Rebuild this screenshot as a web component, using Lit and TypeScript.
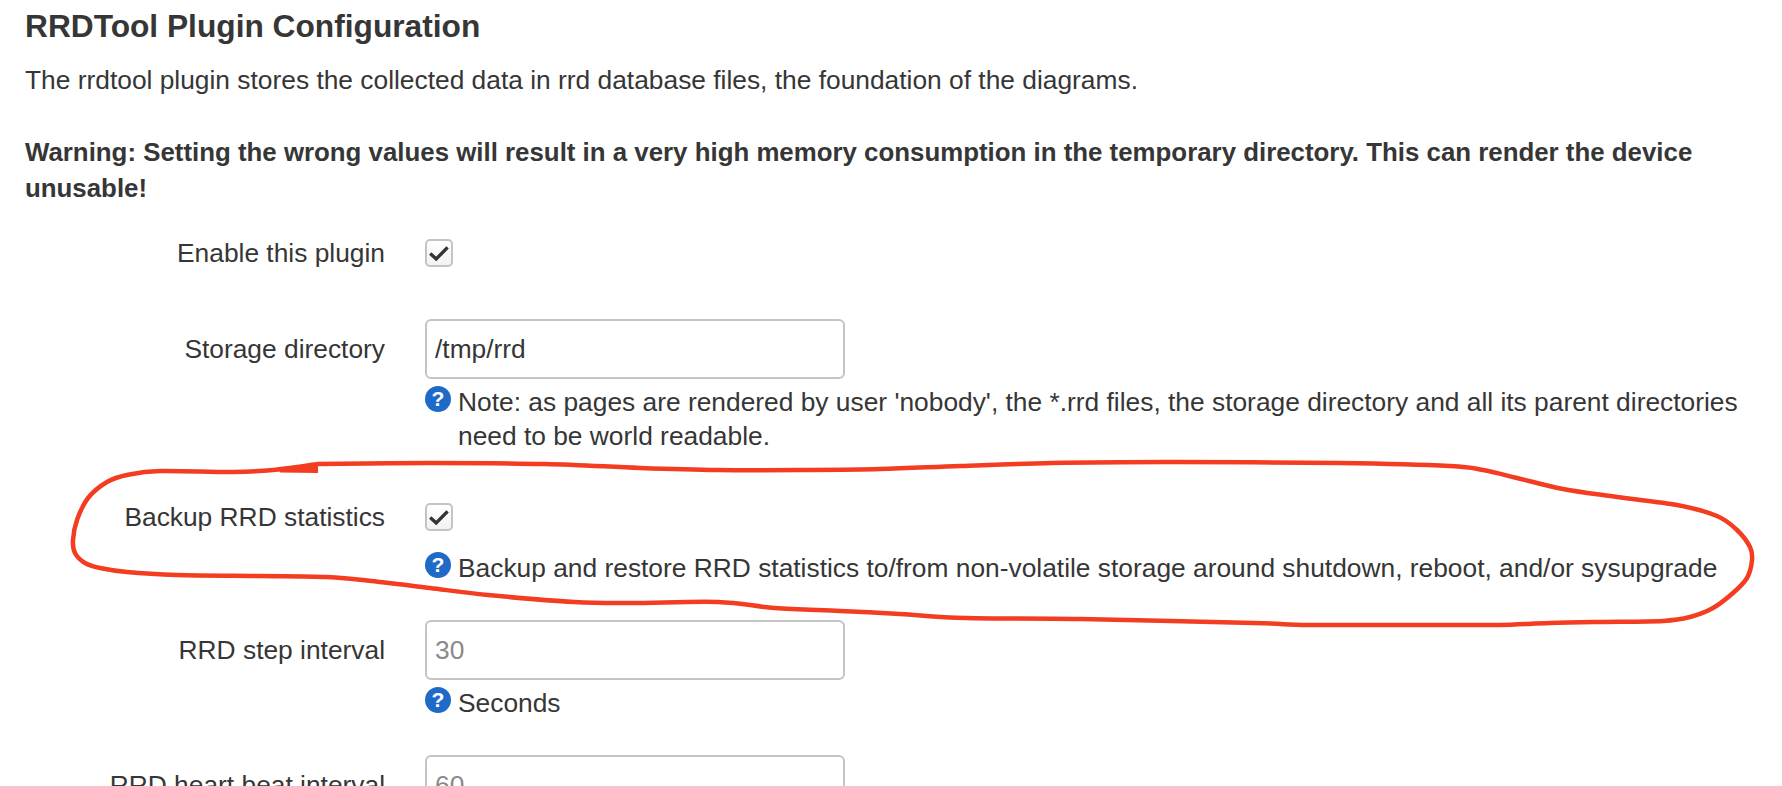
import { LitElement, html, css, svg } from "lit";
import { customElement } from "lit/decorators.js";

const STROKE: [number, number][] = [
  [318,464],[430,463],[545,464],[640,468],[718,470],[800,470],[880,469],[960,466],[1052,463],[1168,462],[1340,463],[1450,466],
  [1483,470],[1517,478],[1563,489],[1617,497],[1677,505],[1717,516],[1737,530],[1750,547],[1752,560],[1747,578],[1733,593],[1713,608],[1690,617],
  [1663,621],[1600,622],[1550,623],[1500,625],[1450,625],[1311,625],[1254,623],[1081,619],[966,618],[900,614],[840,611],
  [775,608],[718,602],[631,603],[574,602],[488,595],[430,588],[380,582],[327,577],[260,576],[177,575],[127,572],[100,568],
  [85,563],[75,553],[73,540],[77,520],[88,498],[107,482],[127,475],[160,471],[233,472],[273,470],[318,464],
];

function smooth(p: [number, number][]): string {
  let d = `M${p[0][0]} ${p[0][1]}`;
  for (let i = 0; i < p.length - 1; i++) {
    const a = p[Math.max(i - 1, 0)], b = p[i], c = p[i + 1], e = p[Math.min(i + 2, p.length - 1)];
    const c1x = b[0] + (c[0] - a[0]) / 6, c1y = b[1] + (c[1] - a[1]) / 6;
    const c2x = c[0] - (e[0] - b[0]) / 6, c2y = c[1] - (e[1] - b[1]) / 6;
    d += `C${c1x.toFixed(1)} ${c1y.toFixed(1)} ${c2x.toFixed(1)} ${c2y.toFixed(1)} ${c[0]} ${c[1]}`;
  }
  return d;
}

@customElement("app-root")
export class AppRoot extends LitElement {
  static styles = css`
    :host {
      display: block;
      position: relative;
      height: 786px;
      overflow: hidden;
      background: #fff;
      color: #363636;
      font-family: "Liberation Sans", Arial, sans-serif;
      font-size: 26.35px;
      line-height: 36px;
    }
    .page { padding: 0 25px; }
    h2 { margin: 0; padding-top: 6px; font-size: 31.7px; line-height: 40px; font-weight: 700; }
    .desc { margin: 16px 0 0; }
    .warn { margin: 36px 0 0; font-size: 25.85px; font-weight: 700; }
    .row { display: grid; grid-template-columns: 360px 1fr; column-gap: 40px; }
    .label { text-align: right; }
    .ctrl { min-width: 0; }
    .row-enable { margin-top: 29px; align-items: start; }
    .row-dir { margin-top: 48px; }
    .row-dir .label, .row-step .label, .row-hb .label { line-height: 60px; }
    .row-backup { margin-top: 46px; }
    .row-backup .help { margin-top: 20px; }
    .row-step { margin-top: 35px; }
    .row-hb { margin-top: 35px; }
    .check {
      display: block;
      width: 28px; height: 28px;
      margin: 4px 0;
      box-sizing: border-box;
      border: 2px solid #c4c4c4;
      border-radius: 5px;
      background: linear-gradient(#ffffff, #f2f2f2);
    }
    .check svg { display: block; width: 24px; height: 24px; }
    input {
      display: block;
      box-sizing: border-box;
      width: 420px; height: 60px;
      padding: 0 8px;
      border: 2px solid #c4c4c4;
      border-radius: 6px;
      font: inherit;
      color: #363636;
      background: #fff;
      outline: none;
    }
    input::placeholder { color: #8a8a8a; opacity: 1; }
    .help { position: relative; padding-left: 33px; margin-top: 6px; line-height: 34px; }
    .q {
      position: absolute; left: 0; top: 1px;
      width: 26px; height: 26px;
      border-radius: 50%;
      background: #1f6ac9;
      color: #fff;
      font-size: 21px;
      font-weight: 700;
      line-height: 26px;
      text-align: center;
    }
    .mark { position: absolute; left: 0; top: 0; pointer-events: none; }
  `;

  private check() {
    return html`<span class="check"><svg viewBox="0 0 24 24"><path d="M3.2 12.4 L9.2 18 L20.6 6.4" fill="none" stroke="#333" stroke-width="3.4"/></svg></span>`;
  }

  private help(text: string) {
    return html`<div class="help"><span class="q">?</span>${text}</div>`;
  }

  render() {
    return html`
      <div class="page">
        <h2>RRDTool Plugin Configuration</h2>
        <p class="desc">The rrdtool plugin stores the collected data in rrd database files, the foundation of the diagrams.</p>
        <p class="warn">Warning: Setting the wrong values will result in a very high memory consumption in the temporary directory. This can render the device unusable!</p>

        <div class="row row-enable">
          <div class="label">Enable this plugin</div>
          <div class="ctrl">${this.check()}</div>
        </div>
        <div class="row row-dir">
          <div class="label">Storage directory</div>
          <div class="ctrl">
            <input type="text" .value=${"/tmp/rrd"} />
            ${this.help("Note: as pages are rendered by user 'nobody', the *.rrd files, the storage directory and all its parent directories need to be world readable.")}
          </div>
        </div>
        <div class="row row-backup">
          <div class="label">Backup RRD statistics</div>
          <div class="ctrl">
            ${this.check()}
            ${this.help("Backup and restore RRD statistics to/from non-volatile storage around shutdown, reboot, and/or sysupgrade")}
          </div>
        </div>
        <div class="row row-step">
          <div class="label">RRD step interval</div>
          <div class="ctrl">
            <input type="text" placeholder="30" />
            ${this.help("Seconds")}
          </div>
        </div>
        <div class="row row-hb">
          <div class="label">RRD heart beat interval</div>
          <div class="ctrl"><input type="text" placeholder="60" /></div>
        </div>
      </div>
      <svg class="mark" width="1782" height="786" viewBox="0 0 1782 786">
        ${svg`<path d=${smooth(STROKE)} fill="none" stroke="#f33c20" stroke-width="4.5" stroke-linecap="round" stroke-linejoin="round"/>`}
        ${svg`<path d="M318 463 L278 469 L280 472.5 L318 473 Z" fill="#f33c20"/>`}
      </svg>
    `;
  }
}
